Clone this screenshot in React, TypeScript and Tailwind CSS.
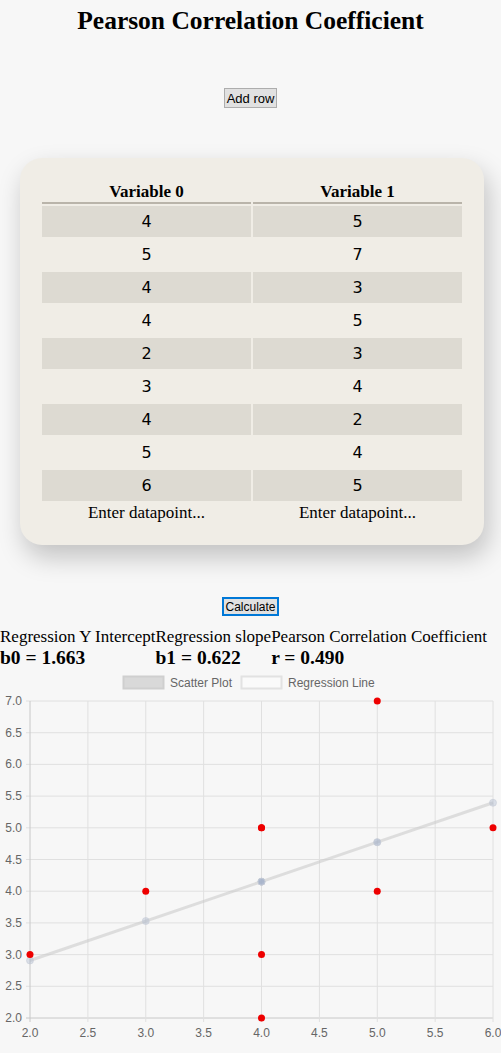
import React from "react"

const rows: [number, number][] = [
  [4, 5],
  [5, 7],
  [4, 3],
  [4, 5],
  [2, 3],
  [3, 4],
  [4, 2],
  [5, 4],
  [6, 5],
]

const b0 = 1.663
const b1 = 0.622

// chart geometry (svg coords)
const L = 30
const R = 493
const T = 26
const B = 343
const px = (x: number) => L + ((x - 2) / 4) * (R - L)
const py = (y: number) => T + ((7 - y) / 5) * (B - T)

function Chart() {
  const xTicks = [2, 2.5, 3, 3.5, 4, 4.5, 5, 5.5, 6]
  const yTicks = [2, 2.5, 3, 3.5, 4, 4.5, 5, 5.5, 6, 6.5, 7]
  const line = rows.map(([x]) => `${px(x)},${py(b0 + b1 * x)}`).join(" ")
  return (
    <svg width="501" height="374" className="mt-[6px] block" style={{ fontFamily: "'Liberation Sans', Arial, sans-serif" }}>
      {/* legend */}
      <rect x="123.5" y="1.5" width="40" height="12" fill="#d9d9d9" stroke="#cfcfcf" strokeWidth="2" />
      <text x="170" y="12" fontSize="12" fill="#666">Scatter Plot</text>
      <rect x="241.5" y="1.5" width="40" height="12" fill="#fafafa" stroke="#e2e2e2" strokeWidth="2" />
      <text x="288" y="12" fontSize="12" fill="#666">Regression Line</text>

      {/* grid */}
      {yTicks.map((t) => (
        <g key={"y" + t}>
          <line x1={L - 4} x2={R} y1={py(t)} y2={py(t)} stroke={t === 2 ? "#c8c8c8" : "#e0e0e0"} />
          <text x="22" y={py(t) + 4} fontSize="12" fill="#666" textAnchor="end">
            {t.toFixed(1)}
          </text>
        </g>
      ))}
      {xTicks.map((t) => (
        <g key={"x" + t}>
          <line x1={px(t)} x2={px(t)} y1={T} y2={B + 4} stroke={t === 2 ? "#c8c8c8" : "#e0e0e0"} />
          <text x={px(t)} y="362" fontSize="12" fill="#666" textAnchor="middle">
            {t.toFixed(1)}
          </text>
        </g>
      ))}

      {/* regression line */}
      <polyline points={line} fill="none" stroke="rgba(200,200,200,0.55)" strokeWidth="3" />
      {rows.map(([x], i) => (
        <circle key={"r" + i} cx={px(x)} cy={py(b0 + b1 * x)} r="3.5" fill="rgba(160,175,200,0.35)" stroke="rgba(200,205,215,0.6)" />
      ))}

      {/* scatter */}
      {rows.map(([x, y], i) => (
        <circle key={"s" + i} cx={px(x)} cy={py(y)} r="3.5" fill="#ee0000" />
      ))}
    </svg>
  )
}

export default function App() {
  return (
    <div className="min-h-screen bg-[#f7f7f7] text-black font-['Liberation_Serif',serif]">
      <h1 className="pt-[6px] text-center text-[25.5px] font-bold leading-[30px]">Pearson Correlation Coefficient</h1>

      <div className="mt-[52px] flex justify-center">
        <button className="h-[20px] border border-[#adadad] bg-[#e1e1e1] px-[2px] font-['Liberation_Sans',sans-serif] text-[13px] leading-none">
          Add row
        </button>
      </div>

      <div className="mt-[50px] mr-[17px] ml-[20px] rounded-[22px] bg-[#f0ede6] px-[20px] pt-[22px] pb-[20px] shadow-[4px_12px_26px_rgba(0,0,0,0.22)]">
        <table className="w-full border-separate border-spacing-[2px] text-center">
          <thead>
            <tr>
              <th className="border-b-2 border-[#b9b4aa] pb-0 text-[17px] leading-[20px] font-bold">Variable 0</th>
              <th className="border-b-2 border-[#b9b4aa] pb-0 text-[17px] leading-[20px] font-bold">Variable 1</th>
            </tr>
          </thead>
          <tbody className="font-['DejaVu_Sans',sans-serif] text-[16px]">
            {rows.map(([a, b], i) => (
              <tr key={i} className={i % 2 === 0 ? "bg-[#dddad2]" : ""}>
                <td className="h-[31px] p-0">{a}</td>
                <td className="h-[31px] p-0">{b}</td>
              </tr>
            ))}
            <tr className="font-['Liberation_Serif',serif] text-[17px]">
              <td className="p-0 leading-[20px]">Enter datapoint...</td>
              <td className="p-0 leading-[20px]">Enter datapoint...</td>
            </tr>
          </tbody>
        </table>
      </div>

      <div className="mt-[52px] flex justify-center">
        <button className="h-[19px] border-2 border-[#0078d7] bg-[#e1e1e1] px-[1px] font-['Liberation_Sans',sans-serif] text-[12px] leading-none">
          Calculate
        </button>
      </div>

      <div className="mt-[11px] flex text-[17px]">
        <div>
          <div className="leading-[20px]">Regression Y Intercept</div>
          <div className="text-[19.5px] font-bold leading-[22px]">b0 = 1.663</div>
        </div>
        <div>
          <div className="leading-[20px]">Regression slope</div>
          <div className="text-[19.5px] font-bold leading-[22px]">b1 = 0.622</div>
        </div>
        <div>
          <div className="leading-[20px]">Pearson Correlation Coefficient</div>
          <div className="text-[19.5px] font-bold leading-[22px]">r = 0.490</div>
        </div>
      </div>

      <Chart />
    </div>
  )
}
